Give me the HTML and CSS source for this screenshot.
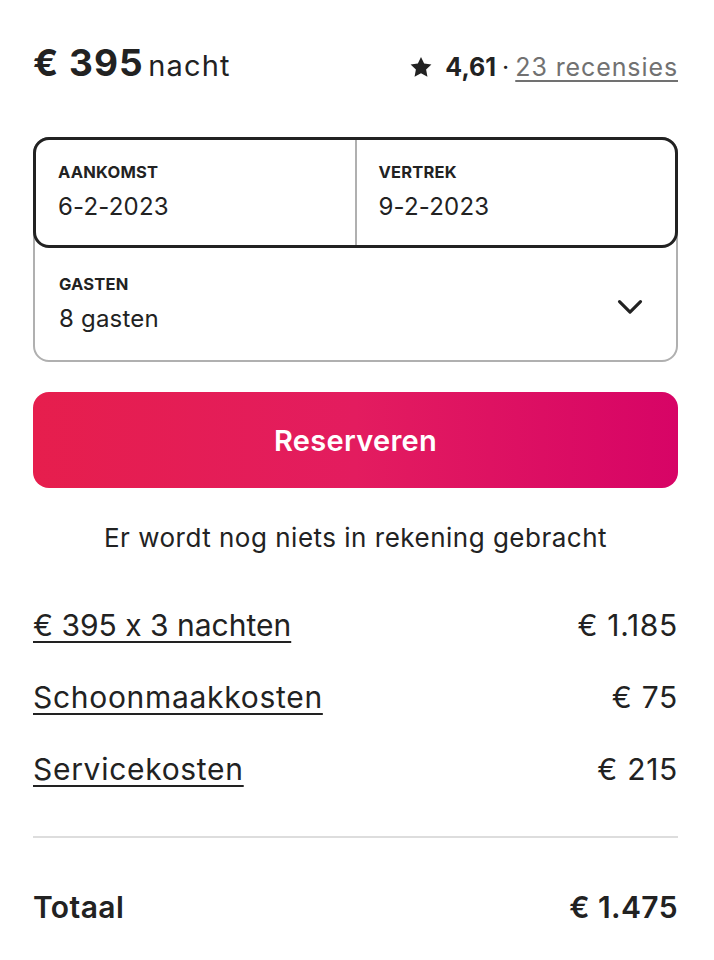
FILE: index.html
```html
<!DOCTYPE html>
<html lang="nl">
<head>
<meta charset="utf-8">
<link rel="stylesheet" href="styles.css">
</head>
<body>
<div class="card">
  <div class="head">
    <div class="price"><span class="amount">€ 395</span> <span class="unit">nacht</span></div>
    <div class="rating">
      <svg class="star" viewBox="0 0 32 32" width="24" height="24"><path d="M16 2.5l4.2 8.9 9.7 1.2-7.1 6.7 1.8 9.6L16 24.2l-8.6 4.7 1.8-9.6-7.1-6.7 9.7-1.2z" fill="#222"/></svg>
      <span class="score">4,61</span><span class="dot">·</span><a class="reviews" href="#">23 recensies</a>
    </div>
  </div>

  <div class="picker">
    <div class="dates">
      <div class="field">
        <div class="label">AANKOMST</div>
        <div class="value">6-2-2023</div>
      </div>
      <div class="field field-right">
        <div class="label">VERTREK</div>
        <div class="value">9-2-2023</div>
      </div>
    </div>
    <div class="guests">
      <div class="field">
        <div class="label">GASTEN</div>
        <div class="value">8 gasten</div>
      </div>
      <svg class="chev" viewBox="0 0 32 32" width="28" height="28"><path d="M4 11l12 12 12-12" fill="none" stroke="#222" stroke-width="3.6" stroke-linecap="round" stroke-linejoin="round"/></svg>
    </div>
  </div>

  <button class="reserve">Reserveren</button>
  <p class="note">Er wordt nog niets in rekening gebracht</p>

  <div class="lines">
    <div class="line"><a class="tight" href="#">€ 395 x 3 nachten</a><span>€ 1.185</span></div>
    <div class="line"><a href="#">Schoonmaakkosten</a><span>€ 75</span></div>
    <div class="line"><a href="#">Servicekosten</a><span>€ 215</span></div>
  </div>

  <div class="total"><span>Totaal</span><span>€ 1.475</span></div>
</div>
</body>
</html>
```

FILE: styles.css
```css
* { box-sizing: border-box; }
html, body { margin: 0; background: #fff; }
body {
  font-family: "Inter", "Liberation Sans", sans-serif;
  font-feature-settings: "calt" 0;
  color: #222;
}
.card {
  width: 714px;
  padding: 40px 36px 0 33px;
}
.head {
  display: flex;
  justify-content: space-between;
  align-items: baseline;
}
.amount {
  font-size: 37px;
  font-weight: 700;
  letter-spacing: 1px;
}
.unit {
  font-size: 29px;
  font-weight: 400;
  letter-spacing: 1.2px;
}
.rating {
  display: flex;
  align-items: baseline;
  font-size: 25px;
}
.star { align-self: center; margin-right: 12px; position: relative; top: 0; }
.score { font-weight: 700; letter-spacing: 0; }
.dot { margin: 0 6px; }
.reviews {
  color: #717171;
  font-weight: 400;
  letter-spacing: 0.9px;
  text-decoration: underline;
  text-underline-offset: 4px;
  text-decoration-thickness: 2px;
}
.picker {
  margin-top: 52px;
  border: 2px solid #b0b0b0;
  border-radius: 16px;
}
.dates {
  display: flex;
  border: 3px solid #222;
  border-radius: 16px;
  margin: -2px -2px 0 -2px;
  height: 111px;
}
.dates .field { flex: 1; padding: 22px 22px 0 22px; }
.dates .field-right { border-left: 2px solid #b0b0b0; }
.label {
  font-size: 16.5px;
  font-weight: 700;
  letter-spacing: 0.2px;
}
.value {
  font-size: 24px;
  margin-top: 10px;
  letter-spacing: 0.2px;
}
.guests {
  display: flex;
  align-items: center;
  justify-content: space-between;
  height: 112px;
  padding: 0 32px 0 24px;
}
.guests .field { padding-top: 0; position: relative; top: -1px; }
.chev { position: relative; top: 2px; }
.reserve {
  display: block;
  width: 100%;
  height: 96px;
  margin-top: 30px;
  border: 0;
  border-radius: 16px;
  background: linear-gradient(to right, #e61e4d 0%, #e31c5f 50%, #d70466 100%);
  color: #fff;
  font-family: inherit;
  font-size: 29px;
  font-weight: 600;
  letter-spacing: 0.3px;
}
.note {
  text-align: center;
  font-size: 26px;
  letter-spacing: 0.5px;
  margin: 34px 0 0;
}
.lines { margin-top: 36px; padding-bottom: 31px; border-bottom: 2px solid #ddd; }
.line {
  display: flex;
  justify-content: space-between;
  font-size: 30px;
  letter-spacing: 0.7px;
  height: 72px;
  align-items: center;
}
.line a {
  color: #222;
  text-decoration: underline;
  text-underline-offset: 5px;
  text-decoration-thickness: 2px;
}
.line a.tight { letter-spacing: 0; }
.total {
  display: flex;
  justify-content: space-between;
  font-size: 30px;
  font-weight: 600;
  letter-spacing: 0.4px;
  margin-top: 51px;
}
```
